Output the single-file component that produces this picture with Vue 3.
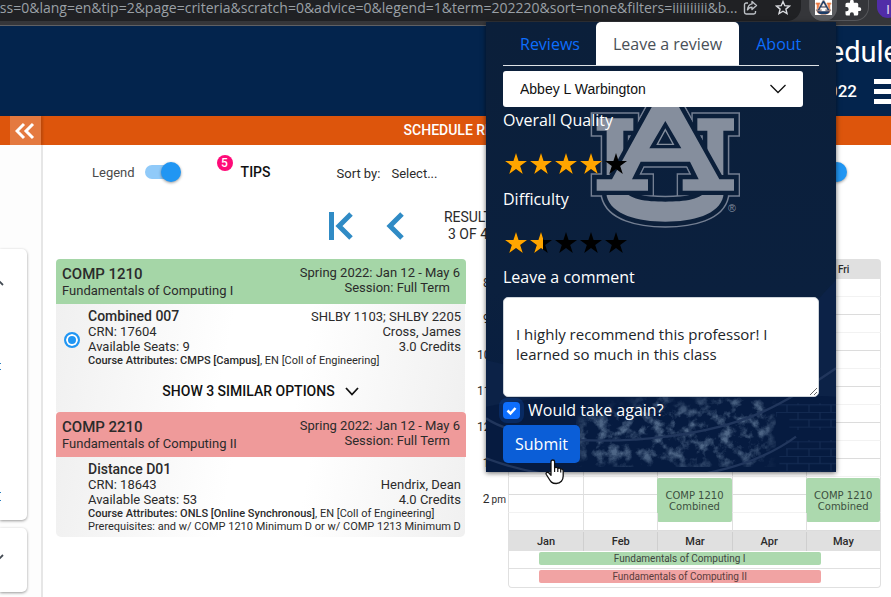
<script setup>
import { ref } from 'vue'

const legendOn = ref(true)
const takeAgain = ref(true)
const comment = ref('\nI highly recommend this professor! I learned so much in this class')
const professor = ref('Abbey L Warbington')

const ratings = [
  { label: 'Overall Quality', value: 4 },
  { label: 'Difficulty', value: 1.5 },
]

const courses = [
  {
    code: 'COMP 1210', name: 'Fundamentals of Computing I', tone: 'green',
    section: 'Combined 007', crn: '17604', seats: 9, place: 'SHLBY 1103; SHLBY 2205',
    teacher: 'Cross, James', credits: '3.0', attrBold: 'CMPS [Campus]', selectable: true, more: true,
  },
  {
    code: 'COMP 2210', name: 'Fundamentals of Computing II', tone: 'red',
    section: 'Distance D01', crn: '18643', seats: 53, place: '',
    teacher: 'Hendrix, Dean', credits: '4.0', attrBold: 'ONLS [Online Synchronous]',
    prereq: 'Prerequisites: and w/ COMP 1210 Minimum D or w/ COMP 1213 Minimum D',
  },
]

const days = ['Mon', 'Tue', 'Wed', 'Thu', 'Fri']
const hours = [[8, 'am'], [9, 'am'], [10, 'am'], [11, 'am'], [12, 'pm'], [1, 'pm'], [2, 'pm']]
const months = ['Jan', 'Feb', 'Mar', 'Apr', 'May']

const fillFor = (value, n) => Math.max(0, Math.min(1, value - n + 1)) * 100
</script>

<template>
  <div class="page">
    <svg class="defs" width="0" height="0" aria-hidden="true">
      <defs>
        <path id="u-shape" d="M332 175H442V212H412V385C425 420 480 425 538 425S651 420 664 385V212H634V175H744V212H712V408C700 465 620 485 538 485S376 465 362 408V212H332Z" />
        <path id="a-shape" fill-rule="evenodd" d="M520 100H556L700 358H744V392H590V358H638L612 305H464L438 358H486V392H332V358H378ZM538 183L490 265H586Z" />
        <path id="star" d="M11 0L13.6 8H22L15.2 12.9L17.8 21L11 16L4.2 21L6.8 12.9L0 8H8.4Z" />
      </defs>
    </svg>

    <div class="toolbar">
      <div class="address">
        <span class="url">ess=0&amp;lang=en&amp;tip=2&amp;page=criteria&amp;scratch=0&amp;advice=0&amp;legend=1&amp;term=202220&amp;sort=none&amp;filters=iiiiiiiiii&amp;b...</span>
        <button class="tool" aria-label="Share">
          <svg width="16" height="16" viewBox="0 0 16 16" fill="none" stroke="#bdc1c6" stroke-width="1.4"><path d="M5 3H3.2A1.7 1.7 0 0 0 1.5 4.700V12.300A1.7 1.7 0 0 0 3.200 14H10.800A1.7 1.7 0 0 0 12.500 12.300V11" /><path d="M9 1.500L13.500 5.500L9 9.500V7.200C7 7.200 5.500 8 4.500 9.800C4.800 7 6.500 4.300 9 3.900Z" stroke-linejoin="round" /></svg>
        </button>
        <button class="tool" aria-label="Bookmark">
          <svg width="16" height="16" viewBox="0 0 16 16" fill="none" stroke="#dadce0" stroke-width="1.4"><path d="M8 1.500L9.800 5.700L14.400 6.100L10.900 9.100L12 13.600L8 11.200L4 13.600L5.100 9.100L1.600 6.100L6.200 5.700Z" /></svg>
        </button>
      </div>
      <div class="extensions">
        <button class="ext active" aria-label="Professor reviews">
          <svg width="17" height="15" viewBox="305 95 466 411">
            <path fill="#fff" d="M305 95H771V506H305Z" />
            <g stroke="#f0a071" stroke-width="20" fill="#e8632a"><use href="#u-shape" /></g>
            <use href="#a-shape" fill="#1d3d68" stroke="#f6c9ae" stroke-width="14" />
            <path d="M362 400C376 465 456 485 538 485S700 465 712 400Z" fill="#1d3d68" />
          </svg>
        </button>
        <button class="ext" aria-label="Extensions">
          <svg width="18" height="18" viewBox="0 0 24 24" fill="#fff"><path d="M20.500 11H19V7a2 2 0 0 0-2-2h-4V3.500a2.500 2.500 0 0 0-5 0V5H4a2 2 0 0 0-2 2v3.800h1.500a2.700 2.700 0 0 1 0 5.400H2V20a2 2 0 0 0 2 2h3.800v-1.500a2.700 2.700 0 0 1 5.400 0V22H17a2 2 0 0 0 2-2v-4h1.500a2.500 2.500 0 0 0 0-5Z" /></svg>
        </button>
      </div>
      <button class="avatar" aria-label="Profile">I</button>
    </div>

    <header class="banner">
      <div class="heading">
        <h1>Schedule</h1>
        <div class="term-row">
          <span>Spring 2022</span>
          <button class="burger" aria-label="Menu"><i></i><i></i><i></i></button>
        </div>
      </div>
    </header>

    <div class="strip">
      <button class="collapse" aria-label="Collapse panel">
        <svg width="20" height="18" viewBox="0 0 20 18" fill="none" stroke="#fff" stroke-width="3"><path d="M9 2L2 9L9 16M18 2L11 9L18 16" /></svg>
      </button>
      <span class="strip-title">SCHEDULE RESULTS</span>
    </div>

    <div class="body">
      <aside class="side">
        <section class="side-card tall">
          <svg width="12" height="8" viewBox="0 0 12 8" fill="none" stroke="#444b54" stroke-width="1.800"><path d="M1 7L6 2L11 7" /></svg>
          <span class="dash"></span>
          <span class="dash low"></span>
        </section>
        <section class="side-card short">
          <svg width="12" height="8" viewBox="0 0 12 8" fill="none" stroke="#444b54" stroke-width="1.800"><path d="M1 1L6 6L11 1" /></svg>
        </section>
      </aside>

      <main class="content">
        <div class="controls">
          <label class="legend">Legend
            <input v-model="legendOn" type="checkbox" class="switch" />
          </label>
          <button class="tips"><span class="badge">5</span>TIPS</button>
          <label class="sort">Sort by: <select><option>Select...</option></select></label>
          <input type="checkbox" class="switch far" checked aria-label="Weekly view" />
        </div>

        <nav class="pager">
          <button aria-label="First result">
            <svg width="24" height="30" viewBox="0 0 24 30" fill="none" stroke="#308bc5" stroke-width="5"><path d="M2.500 1V29M22 3L10 15L22 27" /></svg>
          </button>
          <button aria-label="Previous result">
            <svg width="18" height="30" viewBox="0 0 18 30" fill="none" stroke="#308bc5" stroke-width="5"><path d="M16 3L4 15L16 27" /></svg>
          </button>
          <p>RESULTS<br />3 OF 48</p>
        </nav>

        <div class="columns">
          <section class="list">
            <article v-for="c in courses" :key="c.code" class="course">
              <header class="course-head" :class="c.tone">
                <div class="title">
                  <h2>{{ c.code }}</h2>
                  <p>{{ c.name }}</p>
                </div>
                <div class="dates">
                  <p>Spring 2022: Jan 12 - May 6</p>
                  <p class="session">Session: Full Term</p>
                </div>
              </header>
              <div class="course-body">
                <div class="detail">
                  <div class="pick"><input v-if="c.selectable" type="radio" checked :aria-label="c.section" /></div>
                  <div class="info">
                    <div class="facts">
                      <div>
                        <h3>{{ c.section }}</h3>
                        <p>CRN: {{ c.crn }}</p>
                        <p>Available Seats: {{ c.seats }}</p>
                      </div>
                      <div class="right">
                        <p v-if="c.place">{{ c.place }}</p>
                        <p>{{ c.teacher }}</p>
                        <p>{{ c.credits }} Credits</p>
                      </div>
                    </div>
                    <p class="small"><b>Course Attributes: {{ c.attrBold }}</b>, EN [Coll of Engineering]</p>
                    <p v-if="c.prereq" class="small">{{ c.prereq }}</p>
                  </div>
                </div>
                <button v-if="c.more" class="more">SHOW 3 SIMILAR OPTIONS
                  <svg width="14" height="9" viewBox="0 0 14 9" fill="none" stroke="#111" stroke-width="1.800"><path d="M1 1L7 7.500L13 1" /></svg>
                </button>
              </div>
            </article>
          </section>

          <section class="calendar">
            <table>
              <thead>
                <tr><th class="gutter"></th><th v-for="d in days" :key="d" class="day">{{ d }}</th></tr>
              </thead>
              <tbody>
                <template v-for="[h, half] in hours" :key="h">
                  <tr>
                    <th rowspan="2" class="gutter"><span class="hour">{{ h }}<small>{{ half }}</small></span></th>
                    <td v-for="d in days" :key="d">
                      <div v-if="h === 2 && (d === 'Wed' || d === 'Fri')" class="event">COMP 1210<br />Combined</div>
                    </td>
                  </tr>
                  <tr class="full"><td v-for="d in days" :key="d"></td></tr>
                </template>
              </tbody>
            </table>
            <div class="span-chart">
              <div class="months"><span v-for="m in months" :key="m">{{ m }}</span></div>
              <div class="lane"><span class="bar green">Fundamentals of Computing I</span></div>
              <div class="lane"><span class="bar red">Fundamentals of Computing II</span></div>
            </div>
          </section>
        </div>
      </main>
    </div>

    <div class="popup">
      <svg class="art" viewBox="0 -114 1050 1350" aria-hidden="true">
        <defs>
          <linearGradient id="field" x1="0" y1="0" x2="0" y2="1">
            <stop offset="0" stop-color="#0b1f3a" /><stop offset="0.600" stop-color="#0b203e" /><stop offset="1" stop-color="#061c42" />
          </linearGradient>
          <filter id="leaves" x="0" y="0" width="100%" height="100%">
            <feTurbulence type="fractalNoise" baseFrequency="0.030" numOctaves="5" seed="8" />
            <feColorMatrix values="0 0 0 0 0.260  0 0 0 0 0.380  0 0 0 0 0.540  3 0 0 0 -1.350" result="n" />
            <feGaussianBlur in="SourceGraphic" stdDeviation="22" result="soft" />
            <feComposite in="n" in2="soft" operator="in" />
          </filter>
          <pattern id="bricks" width="66" height="44" patternUnits="userSpaceOnUse">
            <path d="M0 1H66M0 23H66M12 1V23M45 23V45" fill="none" stroke="#25406a" stroke-width="3" />
          </pattern>
        </defs>
        <path fill="url(#field)" d="M0-114H1050V1236H0Z" />
        <path fill="#0c2247" d="M1050 660C1000 710 850 920 500 930S80 920 0 900V1236H1050Z" />
        <path fill="#061b40" d="M0 1040C300 980 800 1000 1050 1010V1236H0Z" />
        <path filter="url(#leaves)" opacity="0.550" d="M270 1110L330 1040L420 1060L500 1000L600 1040L700 1000L850 1010L870 1110L830 1220H290Z" />
        <path fill="url(#bricks)" opacity="0.500" d="M900 1140H1050V1236H880V1180H900ZM870 1030H1050V1110H910V1070H870Z" />
        <path d="M0 1075C80 1130 300 1160 540 1130S880 1040 1050 925M0 1195C250 1290 700 1300 930 1130" fill="none" stroke="#21365c" stroke-width="7" />
        <g stroke="#747f92" stroke-width="36"><use href="#u-shape" /><use href="#a-shape" /></g>
        <g stroke="#0b1f3a" stroke-width="27"><use href="#u-shape" /><use href="#a-shape" /></g>
        <use href="#u-shape" fill="#858e9d" />
        <use href="#a-shape" fill="#858e9d" stroke="#0b1f3a" stroke-width="26" />
        <use href="#a-shape" fill="#858e9d" />
        <path d="M538 209L514 253H562Z" fill="#0b1f3a" stroke="#858e9d" stroke-width="4" />
        <text x="726" y="456" font-size="32" font-family="Liberation Sans, sans-serif" fill="#858e9d">®</text>
      </svg>

      <nav class="tabs">
        <a href="#reviews">Reviews</a>
        <a href="#leave" class="current">Leave a review</a>
        <a href="#about">About</a>
      </nav>

      <form class="review" @submit.prevent>
        <select v-model="professor" class="who" aria-label="Professor">
          <option>Abbey L Warbington</option>
        </select>
        <div v-for="r in ratings" :key="r.label" class="rating">
          <p>{{ r.label }}</p>
          <div class="stars" role="group" :aria-label="r.label">
            <button v-for="n in 5" :key="n" type="button" :aria-label="n + ' stars'">
              <svg width="22" height="21" viewBox="0 0 22 21"><use href="#star" fill="#000" /></svg>
              <span class="lit" :style="{ width: fillFor(r.value, n) + '%' }">
                <svg width="22" height="21" viewBox="0 0 22 21"><use href="#star" fill="#ffa500" /></svg>
              </span>
            </button>
          </div>
        </div>
        <label for="comment" class="comment-label">Leave a comment</label>
        <textarea id="comment" v-model="comment"></textarea>
        <label class="again"><input v-model="takeAgain" type="checkbox" />Would take again?</label>
        <button type="submit" class="submit">Submit</button>
      </form>

      <svg class="cursor" width="20" height="26" viewBox="0 0 20 26" aria-hidden="true"><path d="M6 13.500V2.800a1.800 1.800 0 0 1 3.600 0V9c.5-1 3-1 3.200.5c.8-.9 2.700-.6 2.900.8c1-.6 2.500 0 2.500 1.600V17c0 4-2.500 7.500-7 7.500S5.500 22.500 3.800 19.500L1.300 15.500C.4 13.800 2.300 12.500 3.700 13.800L6 16.200Z" fill="#fff" stroke="#111" stroke-width="1.300" stroke-linejoin="round" /><path d="M9.600 9V13M12.800 10V13M15.700 11V13.500" stroke="#111" stroke-width="1.200" /></svg>
    </div>
  </div>
</template>

<style>
body { margin: 0; background: #fff; }
</style>

<style scoped>
* { box-sizing: border-box; }
.page { position: relative; min-height: 100vh; overflow: hidden; font-family: Roboto, sans-serif; font-size: 13px; line-height: 15px; color: #2b2b2b; display: flex; flex-direction: column; }
button { font: inherit; color: inherit; background: none; border: 0; padding: 0; cursor: pointer; }
p, h1, h2, h3 { margin: 0; }
.defs { position: absolute; }

.toolbar { display: flex; align-items: flex-start; height: 26px; background: #35363a; border-bottom: 1px solid #5f6064; overflow: hidden; }
.address { flex: 1; min-width: 0; height: 21px; padding-right: 10px; display: flex; align-items: flex-start; gap: 16px; background: #202124; border-bottom-right-radius: 14px; }
.url { flex: 1; margin-left: -8px; margin-right: -12px; white-space: nowrap; font-family: "Open Sans", sans-serif; font-size: 14px; line-height: 15px; color: #9aa0a6; }
.tool { height: 16px; }
.tool svg { display: block; }
.extensions { display: flex; margin: 0 8px 0 8px; height: 21px; border: 1px solid #55565a; border-top: 0; border-radius: 0 0 14px 14px; }
.ext { width: 31px; height: 16px; display: flex; align-items: center; justify-content: center; }
.ext.active { height: 21px; width: 27px; padding: 0 0 6px; background: #5b5c60; border-radius: 0 0 13px 13px; }
.avatar { flex: none; width: 22px; height: 18px; margin-right: -8px; background: #512da8; color: #e3dcf3; border-radius: 0 0 11px 11px; line-height: 15px; }

.banner { height: 90px; background: #03244d; color: #fff; display: flex; justify-content: flex-end; overflow: hidden; }
.heading { margin-right: -8px; padding-top: 8px; display: flex; flex-direction: column; align-items: flex-end; }
h1 { font-size: 29px; line-height: 36px; font-weight: 400; }
.term-row { display: flex; align-items: center; gap: 17px; font-size: 17px; line-height: 42px; font-weight: 500; }
.burger { width: 25px; display: flex; flex-direction: column; gap: 5px; }
.burger i { height: 5px; background: #fff; }

.strip { height: 29px; display: flex; align-items: center; background: #dd550c; color: #fff; font-size: 14px; font-weight: 500; }
.collapse { width: 31px; height: 29px; margin-left: 10px; background: #e4793f; display: flex; align-items: center; justify-content: center; box-shadow: 2px 0 2px rgba(0,0,0,.15); }
.collapse svg { margin-right: 2px; }
.strip-title { flex: 1; padding-left: 5px; text-align: center; }

.body { flex: 1; display: flex; }
.side { width: 43px; flex: none; background: #fdfdfd; border-right: 2px solid #e6e6e6; padding-top: 104px; display: flex; flex-direction: column; gap: 8px; }
.side-card { width: 27px; background: #fff; border-radius: 0 5px 5px 0; box-shadow: 0 1px 3px rgba(0,0,0,.4); overflow: hidden; display: flex; flex-direction: column; align-items: flex-start; }
.side-card svg { margin-left: -8px; flex: none; }
.tall { height: 271px; padding-top: 29px; }
.short { height: 64px; padding-top: 26px; }
.dash { width: 1px; height: 7px; margin-top: 77px; border: solid #2a7fc0; border-width: 1px 0; }
.dash.low { height: 9px; margin-top: 122px; }

.content { flex: 1; min-width: 0; padding: 0 10px 10px 13px; }
.controls { height: 54px; display: flex; align-items: center; font-size: 13px; }
.legend { display: flex; align-items: center; gap: 10px; margin-left: 36px; color: #4a4a4a; }
.switch { appearance: none; margin: 0; width: 36px; height: 20px; position: relative; }
.switch::before { content: ""; display: block; width: 30px; height: 14px; margin-top: 3px; border-radius: 7px; background: #90caf9; }
.switch::after { content: ""; position: absolute; right: 0; top: 0; width: 20px; height: 20px; border-radius: 50%; background: #2196f3; box-shadow: 0 1px 3px rgba(0,0,0,.4); }
.far { margin-left: auto; margin-right: 34px; }
.tips { position: relative; margin-left: 60px; font-size: 14px; font-weight: 500; color: #111; }
.badge { position: absolute; right: 38px; top: -10px; width: 16px; height: 16px; border-radius: 50%; background: #ff0a78; color: #fff; font-size: 12px; line-height: 16px; }
.sort { margin-left: 66px; padding-top: 2px; display: flex; gap: 11px; align-items: center; }
.sort select { appearance: none; border: 0; padding: 0; background: none; font: inherit; color: inherit; }
.pager { height: 60px; padding: 0 0 7px 273px; display: flex; align-items: center; }
.pager button { height: 30px; margin-right: 33px; }
.pager p { width: 60px; margin-left: 5px; font-size: 14px; line-height: 17px; text-align: center; white-space: nowrap; }

.columns { display: grid; grid-template-columns: 410fr 404fr; gap: 11px; align-items: start; }
.course-head { height: 45px; padding: 6px 6px 0; display: flex; justify-content: space-between; border-radius: 4px 4px 0 0; white-space: nowrap; }
.course-head.green { background: #a5d6a7; }
.course-head.red { background: #ef9a9a; }
.title { padding-top: 1px; }
h2 { font-size: 15px; line-height: 17px; font-weight: 500; }
.dates { text-align: right; }
.session { padding-right: 10px; }
.course-body { margin-right: 1px; background: linear-gradient(100deg, #f0f0f0, #fff 42%, #fff 60%, #f0f0f0); }
.course:last-child .course-body { border-radius: 0 0 5px 5px; }
.detail { display: flex; padding: 5px 4px 4px 0; }
.pick { width: 32px; flex: none; display: flex; align-items: center; justify-content: center; padding-top: 4px; }
.pick input { appearance: none; width: 16px; height: 16px; margin: 0; border: 2px solid #2196f3; border-radius: 50%; background: #2196f3; box-shadow: inset 0 0 0 2px #fff; }
.info { flex: 1; min-width: 0; }
.facts { display: flex; justify-content: space-between; align-items: flex-end; }
.right { text-align: right; }
h3 { font-size: 14px; line-height: 15px; font-weight: 500; }
.small { font-size: 11px; line-height: 13px; white-space: nowrap; }
.small b { font-weight: 500; }
.more { width: 100%; height: 41px; display: flex; align-items: center; justify-content: center; gap: 10px; font-size: 14px; font-weight: 500; color: #111; }

table { width: 100%; border-collapse: separate; border-spacing: 0; table-layout: fixed; }
.gutter { width: 31px; padding: 0; vertical-align: top; text-align: right; font-weight: 400; }
.hour { display: block; padding-right: 2px; line-height: 8px; font-size: 12px; white-space: nowrap; }
.hour small { margin-left: 2px; font-size: 10px; }
.day { height: 20px; padding: 0; background: #e0e0e0; font-size: 10px; font-weight: 500; }
.day:last-child { border-top-right-radius: 4px; }
td { position: relative; height: 18px; padding: 0; border-left: 1px solid #e0e0e0; border-bottom: 1px solid #f2f2f2; }
.full td { border-bottom-color: #dcdcdc; }
td:last-child { border-right: 1px solid #e0e0e0; }
.event { position: absolute; left: -1px; right: 0; top: -17px; height: 44px; padding-top: 12px; background: #acd9ae; border-radius: 2px; text-align: center; font-family: "DejaVu Sans", sans-serif; font-size: 10px; line-height: 11px; color: #3c5040; }
.span-chart { margin-left: 31px; border: 1px solid #e0e0e0; border-top: 0; border-radius: 0 0 4px 4px; }
.months { display: grid; grid-template-columns: repeat(5, 1fr); padding-top: 1px; background: #e0e0e0; font-size: 11px; line-height: 19px; font-weight: 500; text-align: center; }
.months span + span { border-left: 1px solid #cfcfcf; }
.lane { height: 17px; padding: 1px 16% 0 8%; }
.lane + .lane { height: 19px; border-top: 1px solid #e0e0e0; }
.bar { display: block; height: 13px; border-radius: 2px; font-size: 10px; line-height: 13px; text-align: center; color: #40463f; }
.bar.green { background: #acd9ae; }
.bar.red { background: #f1a3a3; color: #5a3c3c; }

.popup { position: absolute; top: 22px; right: 55px; width: 350px; padding: 0 17px 9px; background: #0b1f3a; box-shadow: 0 1px 5px rgba(0,0,0,.6); color: #fff; font-family: "Open Sans", sans-serif; font-size: 16px; line-height: 24px; }
.art { position: absolute; inset: 0; width: 100%; height: 100%; }
.tabs { position: relative; display: flex; height: 44px; border-bottom: 1px solid #dee2e6; white-space: nowrap; }
.tabs a { padding: 0 16px 0 17px; line-height: 44px; color: #0d6efd; text-decoration: none; }
.tabs .current { padding: 0 17px; background: #fff; color: #495057; border-radius: 5px 5px 0 0; }
.review { position: relative; display: flex; flex-direction: column; align-items: flex-start; }
.who { appearance: none; width: 300px; height: 36px; margin-top: 5px; padding: 0 17px; border: 0; border-radius: 3px; font-family: "Liberation Sans", sans-serif; font-size: 14px; color: #111; background: #fff url("data:image/svg+xml,%3Csvg xmlns='http://www.w3.org/2000/svg' width='16' height='10' fill='none' stroke='%23111' stroke-width='1.300'%3E%3Cpath d='M.5 1L8 8.500L15.500 1'/%3E%3C/svg%3E") no-repeat right 17px center; }
.rating { height: 79px; }
.rating p { line-height: 26px; }
.stars { display: flex; padding: 20px 0 0 2px; }
.stars button { position: relative; width: 25px; height: 21px; padding-right: 3px; }
.stars svg { display: block; }
.lit { position: absolute; left: 0; top: 0; display: block; max-width: 22px; overflow: hidden; }
.comment-label { margin-top: -1px; line-height: 26px; }
textarea { width: 100%; height: 100px; margin-top: 7px; padding: 6px 12px; border: 1px solid #ced4da; border-radius: 5px; font-family: "Open Sans", sans-serif; font-size: 15px; line-height: 20px; color: #212529; }
.again { display: flex; align-items: center; gap: 8px; height: 26px; }
.again input { appearance: none; width: 17px; height: 17px; margin: 0; border-radius: 4px; box-shadow: 0 0 0 4px rgba(13,80,180,.3); background: #0d6efd url("data:image/svg+xml,%3Csvg xmlns='http://www.w3.org/2000/svg' width='17' height='17' fill='none' stroke='white' stroke-width='2.500'%3E%3Cpath d='M4.500 8.500L7.500 11.500L12.500 6'/%3E%3C/svg%3E") center; }
.submit { margin-top: 2px; height: 38px; padding: 0 12px; border-radius: 5px; background: #0b5ed7; color: #fff; }
.cursor { position: absolute; left: 59px; top: 437px; }
</style>
